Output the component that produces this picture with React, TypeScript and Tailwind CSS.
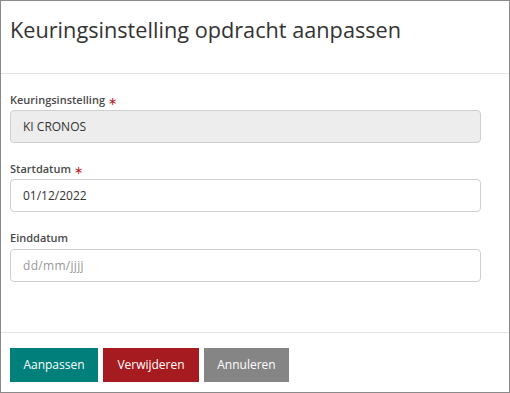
export default function App() {
  const font = { fontFamily: '"Open Sans", "Noto Sans", sans-serif' };
  const Star = () => (
    <span className="text-[#c0161c] text-[11px] font-normal align-top relative top-[1px] ml-[3px]">∗</span>
  );
  return (
    <div
      className="w-[510px] h-[393px] bg-white border border-[#8a8a8a] flex flex-col text-[#333]"
      style={font}
    >
      <div className="h-[73px] px-[9px] flex items-center border-b border-[#e3e3e3] shrink-0">
        <h1 className="text-[21.7px] leading-none font-normal text-[#333] -mt-[14px]">
          Keuringsinstelling opdracht aanpassen
        </h1>
      </div>
      <div className="flex-1 px-[9px] pt-[16px] flex flex-col">
        <div className="text-[11px] leading-[20px] font-semibold text-[#4a4a4a]">
          Keuringsinstelling<Star />
        </div>
        <div className="h-[33px] w-[471px] rounded-[4px] border border-[#cfcfcf] bg-[#ededed] flex items-center px-[12px] text-[12px] text-[#333]">
          KI CRONOS
        </div>
        <div className="mt-[16px] text-[11px] leading-[20px] font-semibold text-[#4a4a4a]">
          Startdatum<Star />
        </div>
        <div className="h-[33px] w-[471px] rounded-[4px] border border-[#cfcfcf] bg-white flex items-center px-[12px] text-[12px] text-[#333]">
          01/12/2022
        </div>
        <div className="mt-[16px] text-[11px] leading-[20px] font-semibold text-[#4a4a4a]">
          Einddatum
        </div>
        <div className="mt-[1px] h-[33px] w-[471px] rounded-[4px] border border-[#cfcfcf] bg-white flex items-center px-[12px] text-[12px] tracking-[0.3px] text-[#999]">
          dd/mm/<span className="underline">jjjj</span>
        </div>
      </div>
      <div className="h-[60px] shrink-0 border-t border-[#e3e3e3] px-[9px] pt-[15px] flex gap-[5px]">
        <button className="h-[34px] w-[88px] bg-[#007f7b] text-white text-[12px]">
          Aanpassen
        </button>
        <button className="h-[34px] w-[96px] bg-[#a51b1f] text-white text-[12px]">
          Verwijderen
        </button>
        <button className="h-[34px] w-[85px] bg-[#858585] text-white text-[12px]">
          Annuleren
        </button>
      </div>
    </div>
  );
}
